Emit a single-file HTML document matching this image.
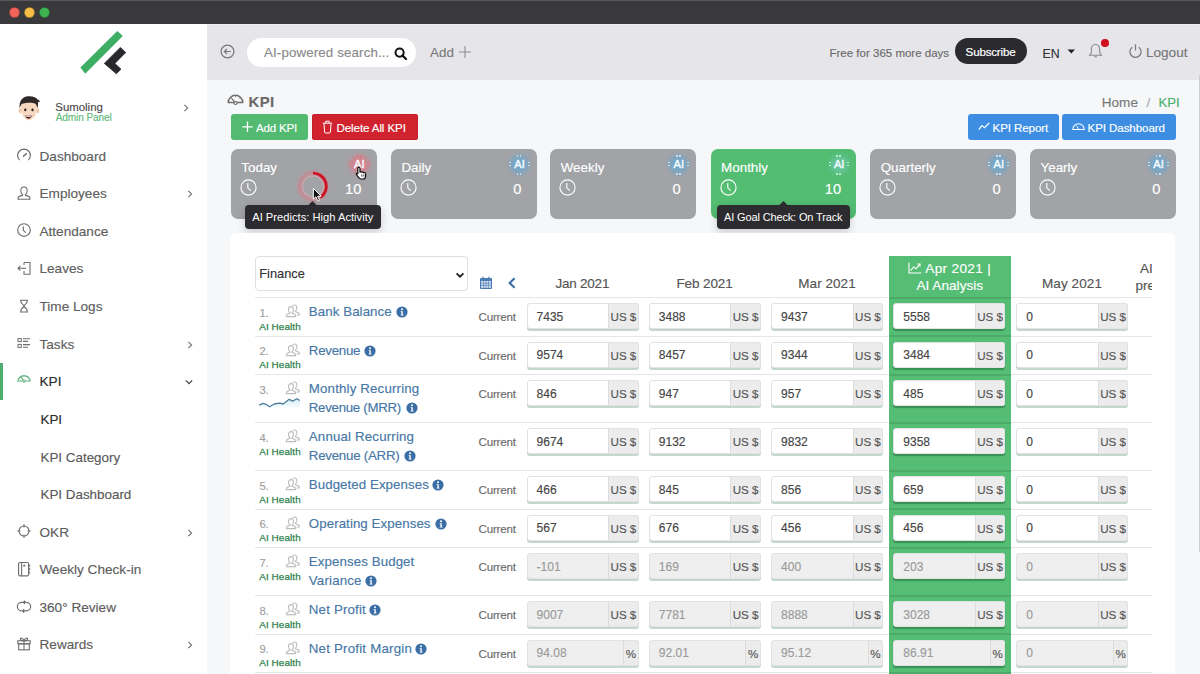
<!DOCTYPE html>
<html><head><meta charset="utf-8">
<style>
*{box-sizing:border-box;margin:0;padding:0}
html,body{width:1200px;height:674px;overflow:hidden}
body{position:relative;background:#f6f7f9;font-family:"Liberation Sans",sans-serif;color:#444}
.b{position:absolute}
.t{position:absolute;white-space:nowrap;line-height:1;-webkit-text-stroke-width:0.15px}
</style></head><body>
<div class="b" style="left:0px;top:0px;width:1200px;height:24px;background:#39393b;"></div>
<div class="b" style="left:0px;top:0px;width:1200px;height:1px;background:#58585a;"></div>
<div class="b" style="left:9.9px;top:7.7px;width:9.6px;height:9.6px;border-radius:50%;background:#f0625a;box-shadow:0 0 0 0.7px #c94b45;"></div>
<div class="b" style="left:24.8px;top:7.7px;width:9.6px;height:9.6px;border-radius:50%;background:#f5bf45;box-shadow:0 0 0 0.7px #c79a30;"></div>
<div class="b" style="left:39.7px;top:7.7px;width:9.6px;height:9.6px;border-radius:50%;background:#3db552;box-shadow:0 0 0 0.7px #2b8d3b;"></div>
<div class="b" style="left:0px;top:24px;width:207px;height:650px;background:#fff;"></div>
<div class="b" style="left:207px;top:24px;width:993px;height:56px;background:#e6e6ea;"></div>
<div class="b" style="left:207px;top:24px;width:993px;height:1.2px;background:#eeeef1;"></div>
<div class="b" style="left:207px;top:80px;width:993px;height:594px;background:#f6f7f9;"></div>
<div class="b" style="left:1199px;top:75px;width:1px;height:477px;background:#cdcdcf;"></div>
<svg class="b" style="left:70px;top:25px;" width="70" height="55" viewBox="0 0 70 55" fill="none"><polygon points="47.3,6 52.8,11.1 15.2,48.7 10.4,42.5" fill="#3dae64"/><polygon points="50.4,22.4 55.7,27.5 44.9,38.4 51,44.2 46.3,48.7 34.3,38.4" fill="#29292d" stroke="#29292d" stroke-width="0.8" stroke-linejoin="round"/></svg>
<svg class="b" style="left:14px;top:92px" width="30" height="32" viewBox="0 0 632 674">
<ellipse cx="130" cy="395" rx="30" ry="55" fill="#efc6a6"/>
<ellipse cx="502" cy="395" rx="30" ry="55" fill="#efc6a6"/>
<path d="M140,250 C130,420 170,560 315,600 C460,560 500,420 490,250 C440,200 200,200 140,250Z" fill="#f6d9c0"/>
<path d="M118,340 C105,200 170,95 300,88 C400,82 470,110 500,160 C520,175 545,185 548,198 C530,205 515,210 505,215 C510,260 505,300 495,340 C480,290 470,260 450,245 C380,215 250,220 165,250 C150,270 135,300 118,340Z" fill="#2f2a28"/>
<ellipse cx="238" cy="378" rx="24" ry="28" fill="#2a211d"/>
<ellipse cx="390" cy="378" rx="24" ry="28" fill="#2a211d"/>
<path d="M230,490 C280,505 340,505 385,485 C375,530 350,560 308,562 C265,562 240,530 230,490Z" fill="#5b2323"/>
<path d="M240,495 C290,508 340,506 378,490 C375,505 370,512 365,515 C320,525 280,522 248,515Z" fill="#fff"/>
</svg>
<div class="t" style="left:55.30px;top:101.85px;font-size:11.4px;color:#4a4a4a;letter-spacing:0.002px;">Sumoling</div>
<div class="t" style="left:55.70px;top:112.53px;font-size:10px;color:#5fb97c;letter-spacing:-0.07px;">Admin Panel</div>
<svg class="b" style="left:182px;top:103px;" width="8" height="10" viewBox="0 0 8 10" fill="none"><polyline points="2.4,1.8 5.6,5 2.4,8.2" stroke="#777" stroke-width="1.2" fill="none"/></svg>
<div class="t" style="left:39.50px;top:149.69px;font-size:13.6px;color:#5e5e5e;">Dashboard</div>
<svg class="b" style="left:15.5px;top:147.1px;" width="16" height="16" viewBox="0 0 16 16" fill="none"><path d="M3.6,13.1 A6.4,6.4 0 1 1 12.4,13.1" stroke="#6e6e6e" stroke-width="1.2" fill="none"/><line x1="7.4" y1="9.2" x2="10.4" y2="6.6" stroke="#6e6e6e" stroke-width="1.4" stroke-linecap="round"/></svg>
<div class="t" style="left:39.50px;top:187.29px;font-size:13.6px;color:#5e5e5e;">Employees</div>
<svg class="b" style="left:15.5px;top:184.7px;" width="16" height="16" viewBox="0 0 16 16" fill="none"><path d="M8,2 C5.8,2 4.8,3.8 4.8,5.8 C4.8,8 6,9.3 6.6,9.7 L6.6,10.4 C4,10.9 2,11.7 2,13.4 L2,14.2 L14,14.2 L14,13.4 C14,11.7 12,10.9 9.4,10.4 L9.4,9.7 C10,9.3 11.2,8 11.2,5.8 C11.2,3.8 10.2,2 8,2Z" stroke="#6e6e6e" stroke-width="1.1" fill="none"/></svg>
<svg class="b" style="left:186px;top:189.2px;" width="8" height="10" viewBox="0 0 8 10" fill="none"><polyline points="2.4,1.8 5.6,5 2.4,8.2" stroke="#777" stroke-width="1.2" fill="none"/></svg>
<div class="t" style="left:39.50px;top:224.89px;font-size:13.6px;color:#5e5e5e;">Attendance</div>
<svg class="b" style="left:15.5px;top:222.29999999999998px;" width="16" height="16" viewBox="0 0 16 16" fill="none"><circle cx="8" cy="8" r="6.3" stroke="#6e6e6e" stroke-width="1.15" fill="none"/><polyline points="7.3,4.2 7.3,8.3 9.8,10.6" stroke="#6e6e6e" stroke-width="1.15" fill="none"/></svg>
<div class="t" style="left:39.50px;top:262.49px;font-size:13.6px;color:#5e5e5e;">Leaves</div>
<svg class="b" style="left:15.5px;top:259.9px;" width="16" height="16" viewBox="0 0 16 16" fill="none"><polyline points="8,2.5 14,2.5 14,14.2 8,14.2 8,11" stroke="#6e6e6e" stroke-width="1.1" fill="none"/><line x1="8" y1="2.5" x2="8" y2="5" stroke="#6e6e6e" stroke-width="1.1"/><line x1="2" y1="8.3" x2="10" y2="8.3" stroke="#6e6e6e" stroke-width="1.1"/><polyline points="4.3,6 2,8.3 4.3,10.6" stroke="#6e6e6e" stroke-width="1.1" fill="none"/></svg>
<div class="t" style="left:39.50px;top:300.09px;font-size:13.6px;color:#5e5e5e;">Time Logs</div>
<svg class="b" style="left:15.5px;top:297.5px;" width="16" height="16" viewBox="0 0 16 16" fill="none"><path d="M4,2.2 L12,2.2 M4,14 L12,14 M5,2.2 L5,4.5 L8,7.8 L11,4.5 L11,2.2 M5,14 L5,11.5 L8,8.3 L11,11.5 L11,14" stroke="#6e6e6e" stroke-width="1.1" fill="none"/></svg>
<div class="t" style="left:39.50px;top:337.69px;font-size:13.6px;color:#5e5e5e;">Tasks</div>
<svg class="b" style="left:15.5px;top:335.09999999999997px;" width="16" height="16" viewBox="0 0 16 16" fill="none"><rect x="2" y="3.6" width="3.3" height="3" stroke="#6e6e6e" stroke-width="1" fill="none"/><rect x="2" y="9.4" width="3.3" height="3" stroke="#6e6e6e" stroke-width="1" fill="none"/><path d="M7,3.8 L14,3.8 M7,6.4 L12,6.4 M7,9.6 L14,9.6 M7,12.2 L12,12.2" stroke="#6e6e6e" stroke-width="1.1"/></svg>
<svg class="b" style="left:186px;top:339.59999999999997px;" width="8" height="10" viewBox="0 0 8 10" fill="none"><polyline points="2.4,1.8 5.6,5 2.4,8.2" stroke="#777" stroke-width="1.2" fill="none"/></svg>
<div class="t" style="left:39.50px;top:375.29px;font-size:13.6px;color:#2a2a2a;">KPI</div>
<svg class="b" style="left:15.5px;top:369.09999999999997px;" width="16" height="16" viewBox="0 0 16 16" fill="none"><path d="M1.8,12 A6.3,6.3 0 0 1 14.2,12 Z" stroke="#5cb27a" stroke-width="1.2" fill="none" stroke-linejoin="round"/><line x1="8" y1="12" x2="5" y2="8.2" stroke="#5cb27a" stroke-width="1.1"/><circle cx="8" cy="12.2" r="1.2" fill="#fff" stroke="#5cb27a" stroke-width="1"/><path d="M8,5.8 L8,6.9 M4,7.4 L4.8,8.1 M12,7.4 L11.2,8.1" stroke="#5cb27a" stroke-width="0.9"/></svg>
<svg class="b" style="left:183.5px;top:378.40000000000003px;" width="10" height="8" viewBox="0 0 10 8" fill="none"><polyline points="1.8,2.4 5,5.6 8.2,2.4" stroke="#444" stroke-width="1.3" fill="none"/></svg>
<div class="t" style="left:40.50px;top:413.06px;font-size:13.4px;color:#2a2a2a;">KPI</div>
<div class="t" style="left:40.50px;top:450.66px;font-size:13.4px;color:#5a5a5a;">KPI Category</div>
<div class="t" style="left:40.50px;top:488.26px;font-size:13.4px;color:#5a5a5a;">KPI Dashboard</div>
<div class="t" style="left:39.50px;top:525.69px;font-size:13.6px;color:#5e5e5e;">OKR</div>
<svg class="b" style="left:15.5px;top:523.1px;" width="16" height="16" viewBox="0 0 16 16" fill="none"><circle cx="8" cy="8" r="5" stroke="#6e6e6e" stroke-width="1.15" fill="none"/><path d="M8,1.3 L8,4.5 M8,11.5 L8,14.7 M1.3,8 L4.5,8 M11.5,8 L14.7,8" stroke="#6e6e6e" stroke-width="1.15"/></svg>
<svg class="b" style="left:186px;top:527.6px;" width="8" height="10" viewBox="0 0 8 10" fill="none"><polyline points="2.4,1.8 5.6,5 2.4,8.2" stroke="#777" stroke-width="1.2" fill="none"/></svg>
<div class="t" style="left:39.50px;top:563.29px;font-size:13.6px;color:#5e5e5e;">Weekly Check-in</div>
<svg class="b" style="left:15.5px;top:560.6999999999999px;" width="16" height="16" viewBox="0 0 16 16" fill="none"><rect x="2.6" y="1.5" width="10" height="13.3" rx="1.2" stroke="#6e6e6e" stroke-width="1.15" fill="none"/><line x1="5.6" y1="1.5" x2="5.6" y2="14.8" stroke="#6e6e6e" stroke-width="1.1"/><rect x="7.3" y="3.7" width="1.9" height="1.9" fill="#6e6e6e"/><path d="M12.6,3.6 A1.1,1.1 0 0 1 12.6,5.8 M12.6,7 A1.1,1.1 0 0 1 12.6,9.2 M12.6,10.4 A1.1,1.1 0 0 1 12.6,12.6" stroke="#6e6e6e" stroke-width="1" fill="none"/></svg>
<div class="t" style="left:39.50px;top:600.89px;font-size:13.6px;color:#5e5e5e;">360° Review</div>
<svg class="b" style="left:15.5px;top:598.3000000000001px;" width="16" height="16" viewBox="0 0 16 16" fill="none"><path d="M5.6,12.9 A4.3,4.3 0 0 1 5.6,4.3 L9.2,4.3 M7.8,2.7 L9.6,4.3 L7.8,5.9 M10.4,4.3 A4.3,4.3 0 0 1 10.4,12.9 L6.8,12.9 M8.2,11.3 L6.4,12.9 L8.2,14.5" stroke="#6e6e6e" stroke-width="1.15" fill="none"/></svg>
<div class="t" style="left:39.50px;top:638.49px;font-size:13.6px;color:#5e5e5e;">Rewards</div>
<svg class="b" style="left:15.5px;top:635.9px;" width="16" height="16" viewBox="0 0 16 16" fill="none"><rect x="1.8" y="4.8" width="12.4" height="3" stroke="#6e6e6e" stroke-width="1.1" fill="none"/><rect x="2.7" y="7.8" width="10.6" height="6" stroke="#6e6e6e" stroke-width="1.1" fill="none"/><path d="M8,4.8 L8,13.8 M8,4.8 C7,2 4.2,1.2 4.4,3.2 C4.5,4.2 6,4.8 8,4.8 C10,4.8 11.5,4.2 11.6,3.2 C11.8,1.2 9,2 8,4.8" stroke="#6e6e6e" stroke-width="1.05" fill="none"/></svg>
<svg class="b" style="left:186px;top:640.4px;" width="8" height="10" viewBox="0 0 8 10" fill="none"><polyline points="2.4,1.8 5.6,5 2.4,8.2" stroke="#777" stroke-width="1.2" fill="none"/></svg>
<div class="b" style="left:0px;top:362.5px;width:2.6px;height:37.5px;background:#4fae6e;"></div>
<svg class="b" style="left:219.5px;top:43.5px;" width="15" height="15" viewBox="0 0 15 15" fill="none"><circle cx="7.5" cy="7.5" r="6.4" stroke="#777" stroke-width="1.2" fill="none"/><path d="M10.8,7.5 L4.4,7.5 M7,4.9 L4.4,7.5 L7,10.1" stroke="#777" stroke-width="1.2" fill="none"/></svg>
<div class="b" style="left:247px;top:38px;width:169px;height:29px;background:#fff;border-radius:14.5px;"></div>
<div class="t" style="left:264.00px;top:45.94px;font-size:13.3px;color:#8a8a8a;letter-spacing:0.138px;">AI-powered search...</div>
<svg class="b" style="left:394px;top:46.5px;" width="14" height="13" viewBox="0 0 14 13" fill="none"><circle cx="5.6" cy="5.6" r="4.1" stroke="#111" stroke-width="2" fill="none"/><line x1="8.6" y1="8.6" x2="12" y2="12" stroke="#111" stroke-width="2.2" stroke-linecap="round"/></svg>
<div class="t" style="left:430.00px;top:45.86px;font-size:13.4px;color:#7a7a7a;">Add</div>
<svg class="b" style="left:457.5px;top:44.5px;" width="14" height="14" viewBox="0 0 14 14" fill="none"><path d="M7,1 L7,13 M1,7 L13,7" stroke="#8f8f8f" stroke-width="1.1"/></svg>
<div class="t" style="left:829.50px;top:47.57px;font-size:11.5px;color:#6a6a6a;letter-spacing:0.004px;">Free for 365 more days</div>
<div class="b" style="left:955px;top:38.3px;width:71.5px;height:25.5px;background:#2b2b2f;border-radius:13px;"></div>
<div class="t" style="left:990.50px;transform:translateX(-50%);top:45.58px;font-size:11.6px;color:#fff;letter-spacing:-0.194px;-webkit-text-stroke-width:0.2px;">Subscribe</div>
<div class="t" style="left:1042.50px;top:47.80px;font-size:12.4px;color:#333;">EN</div>
<svg class="b" style="left:1067px;top:49px;" width="9" height="5" viewBox="0 0 9 5" fill="none"><polygon points="0.5,0.5 8,0.5 4.25,4.5" fill="#222"/></svg>
<svg class="b" style="left:1087px;top:42px;" width="17" height="17" viewBox="0 0 17 17" fill="none"><path d="M8.5,2.5 C5.5,2.5 4.3,5 4.3,7.5 L4.3,10.8 L2.6,13.2 L14.4,13.2 L12.7,10.8 L12.7,7.5 C12.7,5 11.5,2.5 8.5,2.5Z M7,14.8 L10,14.8" stroke="#8a8a8a" stroke-width="1.1" fill="none"/></svg>
<div class="b" style="left:1101.3px;top:39.3px;width:7.6px;height:7.6px;border-radius:50%;background:#d0101f;"></div>
<svg class="b" style="left:1127.5px;top:43.2px;" width="15" height="15" viewBox="0 0 15 15" fill="none"><path d="M4.2,4.2 A5.6,5.6 0 1 0 10.8,4.2" stroke="#777" stroke-width="1.2" fill="none"/><line x1="7.5" y1="1.3" x2="7.5" y2="7.5" stroke="#777" stroke-width="1.2"/></svg>
<div class="t" style="left:1145.90px;top:45.79px;font-size:13.6px;color:#777;letter-spacing:0.004px;">Logout</div>
<svg class="b" style="left:226px;top:93px;" width="19" height="13" viewBox="0 0 19 13" fill="none"><path d="M2.2,9.6 A7.3,7.3 0 0 1 16.8,9.6 Z" stroke="#6e6e6e" stroke-width="1.5" fill="none" stroke-linejoin="round"/><line x1="9.5" y1="9.6" x2="5.6" y2="5.4" stroke="#6e6e6e" stroke-width="1.3"/><circle cx="9.5" cy="10" r="1.5" fill="#f6f7f9" stroke="#6e6e6e" stroke-width="1.2"/><path d="M9.5,2.4 L9.5,3.8 M4.6,4.4 L5.5,5.3 M14.4,4.4 L13.5,5.3" stroke="#6e6e6e" stroke-width="1.1"/></svg>
<div class="t" style="left:248.50px;top:94.99px;font-size:14.9px;color:#6a6a6a;font-weight:bold;letter-spacing:0.389px;">KPI</div>
<div class="b" style="left:231px;top:114.4px;width:77px;height:25.2px;background:#52ba71;border-radius:3px;"></div>
<svg class="b" style="left:241.5px;top:120.5px;" width="11" height="12" viewBox="0 0 11 12" fill="none"><path d="M5.5,0.5 L5.5,11 M0.3,5.8 L10.7,5.8" stroke="#fff" stroke-width="1.3"/></svg>
<div class="t" style="left:256.00px;top:121.68px;font-size:11.6px;color:#fff;letter-spacing:-0.239px;">Add KPI</div>
<div class="b" style="left:312px;top:114.4px;width:105.5px;height:25.2px;background:#d1232e;border-radius:3px;box-shadow:inset 0 0 0 1px #c21e29;"></div>
<svg class="b" style="left:322px;top:119.5px;" width="11" height="14" viewBox="0 0 11 14" fill="none"><path d="M0.8,3.2 L10.2,3.2 M3.8,3.2 L3.8,1.2 L7.2,1.2 L7.2,3.2" stroke="#fff" stroke-width="1" fill="none"/><path d="M2,3.6 L2.6,12.2 C2.7,12.8 3,13 3.6,13 L7.4,13 C8,13 8.3,12.8 8.4,12.2 L9,3.6" stroke="#fff" stroke-width="1" fill="none"/></svg>
<div class="t" style="left:336.50px;top:121.68px;font-size:11.6px;color:#fff;letter-spacing:-0.117px;">Delete All KPI</div>
<div class="t" style="left:1101.80px;top:95.77px;font-size:13.5px;color:#777;letter-spacing:0.03px;">Home</div>
<div class="t" style="left:1146.50px;top:95.57px;font-size:13.5px;color:#aaa;">/</div>
<div class="t" style="left:1158.40px;top:95.83px;font-size:13.2px;color:#4caf6a;">KPI</div>
<div class="b" style="left:967.7px;top:114.4px;width:91.3px;height:25.2px;background:#3d8ee3;border-radius:3px;"></div>
<svg class="b" style="left:977.5px;top:122px;" width="12" height="9" viewBox="0 0 12 9" fill="none"><polyline points="0.8,7.5 4,3.6 6.5,5.6 11.2,1" stroke="#fff" stroke-width="1.2" fill="none"/></svg>
<div class="t" style="left:992.60px;top:121.88px;font-size:11.6px;color:#fff;letter-spacing:-0.123px;">KPI Report</div>
<div class="b" style="left:1062.2px;top:114.4px;width:113.8px;height:25.2px;background:#3d8ee3;border-radius:3px;"></div>
<svg class="b" style="left:1071.5px;top:121px;" width="13" height="10" viewBox="0 0 13 10" fill="none"><path d="M0.8,8.5 A5.7,5.7 0 0 1 12.2,8.5 Z" stroke="#fff" stroke-width="1.05" fill="none"/><line x1="6.5" y1="8" x2="4.5" y2="4.8" stroke="#fff" stroke-width="1"/></svg>
<div class="t" style="left:1087.50px;top:121.88px;font-size:11.6px;color:#fff;letter-spacing:-0.094px;">KPI Dashboard</div>
<div class="b" style="left:231px;top:149.3px;width:145.6px;height:69.5px;background:#a2a3a7;border-radius:7px;"></div>
<div class="t" style="left:241.30px;top:161.46px;font-size:13.4px;color:#fff;">Today</div>
<svg class="b" style="left:240px;top:178.5px;" width="17" height="17" viewBox="0 0 17 17" fill="none"><circle cx="8.5" cy="8.5" r="7.6" stroke="#fff" stroke-width="1.1" fill="none"/><polyline points="7.8,4 7.8,8.8 10.8,11.6" stroke="#fff" stroke-width="1.1" fill="none"/></svg>
<div class="t" style="right:838.70px;top:182.16px;font-size:14.7px;color:#fff;">10</div>
<div class="b" style="left:349.7px;top:155.1px;width:19px;height:19px;border-radius:50%;background:rgba(228,120,132,0.8);filter:blur(2.6px);"></div>
<div class="b" style="left:356.5px;top:155.0px;width:1.8px;height:1.5px;background:#de7580;"></div>
<div class="b" style="left:359.6px;top:155.0px;width:1.8px;height:1.5px;background:#de7580;"></div>
<div class="b" style="left:356.5px;top:173.0px;width:1.8px;height:1.5px;background:#de7580;"></div>
<div class="b" style="left:359.6px;top:173.0px;width:1.8px;height:1.5px;background:#de7580;"></div>
<div class="b" style="left:348.8px;top:161.8px;width:2px;height:1.3px;background:#de7580;"></div>
<div class="b" style="left:348.8px;top:164.9px;width:2px;height:1.3px;background:#de7580;"></div>
<div class="b" style="left:367.5px;top:161.8px;width:2px;height:1.3px;background:#de7580;"></div>
<div class="b" style="left:367.5px;top:164.9px;width:2px;height:1.3px;background:#de7580;"></div>
<div class="t" style="left:359.40px;transform:translateX(-50%);top:158.82px;font-size:11.2px;color:#f2fbff;-webkit-text-stroke-width:0.45px;">AI</div>
<div class="b" style="left:391.1px;top:149.3px;width:145.6px;height:69.5px;background:#a2a3a7;border-radius:7px;"></div>
<div class="t" style="left:401.40px;top:161.46px;font-size:13.4px;color:#fff;">Daily</div>
<svg class="b" style="left:400.1px;top:178.5px;" width="17" height="17" viewBox="0 0 17 17" fill="none"><circle cx="8.5" cy="8.5" r="7.6" stroke="#fff" stroke-width="1.1" fill="none"/><polyline points="7.8,4 7.8,8.8 10.8,11.6" stroke="#fff" stroke-width="1.1" fill="none"/></svg>
<div class="t" style="right:678.60px;top:182.16px;font-size:14.7px;color:#fff;">0</div>
<div class="b" style="left:509.8px;top:155.1px;width:19px;height:19px;border-radius:50%;background:rgba(112,166,202,0.9);filter:blur(2.6px);"></div>
<div class="b" style="left:516.6px;top:155.0px;width:1.8px;height:1.5px;background:#c4e0f0;"></div>
<div class="b" style="left:519.7px;top:155.0px;width:1.8px;height:1.5px;background:#c4e0f0;"></div>
<div class="b" style="left:516.6px;top:173.0px;width:1.8px;height:1.5px;background:#c4e0f0;"></div>
<div class="b" style="left:519.7px;top:173.0px;width:1.8px;height:1.5px;background:#c4e0f0;"></div>
<div class="b" style="left:508.9px;top:161.8px;width:2px;height:1.3px;background:#c4e0f0;"></div>
<div class="b" style="left:508.9px;top:164.9px;width:2px;height:1.3px;background:#c4e0f0;"></div>
<div class="b" style="left:527.6px;top:161.8px;width:2px;height:1.3px;background:#c4e0f0;"></div>
<div class="b" style="left:527.6px;top:164.9px;width:2px;height:1.3px;background:#c4e0f0;"></div>
<div class="t" style="left:519.50px;transform:translateX(-50%);top:158.82px;font-size:11.2px;color:#f2fbff;-webkit-text-stroke-width:0.45px;">AI</div>
<div class="b" style="left:550.4px;top:149.3px;width:145.6px;height:69.5px;background:#a2a3a7;border-radius:7px;"></div>
<div class="t" style="left:560.70px;top:161.46px;font-size:13.4px;color:#fff;">Weekly</div>
<svg class="b" style="left:559.4px;top:178.5px;" width="17" height="17" viewBox="0 0 17 17" fill="none"><circle cx="8.5" cy="8.5" r="7.6" stroke="#fff" stroke-width="1.1" fill="none"/><polyline points="7.8,4 7.8,8.8 10.8,11.6" stroke="#fff" stroke-width="1.1" fill="none"/></svg>
<div class="t" style="right:519.30px;top:182.16px;font-size:14.7px;color:#fff;">0</div>
<div class="b" style="left:669.1px;top:155.1px;width:19px;height:19px;border-radius:50%;background:rgba(112,166,202,0.9);filter:blur(2.6px);"></div>
<div class="b" style="left:675.9px;top:155.0px;width:1.8px;height:1.5px;background:#c4e0f0;"></div>
<div class="b" style="left:679.0px;top:155.0px;width:1.8px;height:1.5px;background:#c4e0f0;"></div>
<div class="b" style="left:675.9px;top:173.0px;width:1.8px;height:1.5px;background:#c4e0f0;"></div>
<div class="b" style="left:679.0px;top:173.0px;width:1.8px;height:1.5px;background:#c4e0f0;"></div>
<div class="b" style="left:668.2px;top:161.8px;width:2px;height:1.3px;background:#c4e0f0;"></div>
<div class="b" style="left:668.2px;top:164.9px;width:2px;height:1.3px;background:#c4e0f0;"></div>
<div class="b" style="left:686.9px;top:161.8px;width:2px;height:1.3px;background:#c4e0f0;"></div>
<div class="b" style="left:686.9px;top:164.9px;width:2px;height:1.3px;background:#c4e0f0;"></div>
<div class="t" style="left:678.80px;transform:translateX(-50%);top:158.82px;font-size:11.2px;color:#f2fbff;-webkit-text-stroke-width:0.45px;">AI</div>
<div class="b" style="left:710.8px;top:149.3px;width:145.6px;height:69.5px;background:#53bd72;border-radius:7px;"></div>
<div class="t" style="left:721.10px;top:161.46px;font-size:13.4px;color:#fff;">Monthly</div>
<svg class="b" style="left:719.8px;top:178.5px;" width="17" height="17" viewBox="0 0 17 17" fill="none"><circle cx="8.5" cy="8.5" r="7.6" stroke="#fff" stroke-width="1.1" fill="none"/><polyline points="7.8,4 7.8,8.8 10.8,11.6" stroke="#fff" stroke-width="1.1" fill="none"/></svg>
<div class="t" style="right:358.90px;top:182.16px;font-size:14.7px;color:#fff;">10</div>
<div class="b" style="left:829.5px;top:155.1px;width:19px;height:19px;border-radius:50%;background:rgba(105,198,165,0.75);filter:blur(2.6px);"></div>
<div class="b" style="left:836.3px;top:155.0px;width:1.8px;height:1.5px;background:#b4ecca;"></div>
<div class="b" style="left:839.4px;top:155.0px;width:1.8px;height:1.5px;background:#b4ecca;"></div>
<div class="b" style="left:836.3px;top:173.0px;width:1.8px;height:1.5px;background:#b4ecca;"></div>
<div class="b" style="left:839.4px;top:173.0px;width:1.8px;height:1.5px;background:#b4ecca;"></div>
<div class="b" style="left:828.6px;top:161.8px;width:2px;height:1.3px;background:#b4ecca;"></div>
<div class="b" style="left:828.6px;top:164.9px;width:2px;height:1.3px;background:#b4ecca;"></div>
<div class="b" style="left:847.3px;top:161.8px;width:2px;height:1.3px;background:#b4ecca;"></div>
<div class="b" style="left:847.3px;top:164.9px;width:2px;height:1.3px;background:#b4ecca;"></div>
<div class="t" style="left:839.20px;transform:translateX(-50%);top:158.82px;font-size:11.2px;color:#f2fbff;-webkit-text-stroke-width:0.45px;">AI</div>
<div class="b" style="left:870.4px;top:149.3px;width:145.6px;height:69.5px;background:#a2a3a7;border-radius:7px;"></div>
<div class="t" style="left:880.70px;top:161.46px;font-size:13.4px;color:#fff;">Quarterly</div>
<svg class="b" style="left:879.4px;top:178.5px;" width="17" height="17" viewBox="0 0 17 17" fill="none"><circle cx="8.5" cy="8.5" r="7.6" stroke="#fff" stroke-width="1.1" fill="none"/><polyline points="7.8,4 7.8,8.8 10.8,11.6" stroke="#fff" stroke-width="1.1" fill="none"/></svg>
<div class="t" style="right:199.30px;top:182.16px;font-size:14.7px;color:#fff;">0</div>
<div class="b" style="left:989.1px;top:155.1px;width:19px;height:19px;border-radius:50%;background:rgba(112,166,202,0.9);filter:blur(2.6px);"></div>
<div class="b" style="left:995.9px;top:155.0px;width:1.8px;height:1.5px;background:#c4e0f0;"></div>
<div class="b" style="left:999.0px;top:155.0px;width:1.8px;height:1.5px;background:#c4e0f0;"></div>
<div class="b" style="left:995.9px;top:173.0px;width:1.8px;height:1.5px;background:#c4e0f0;"></div>
<div class="b" style="left:999.0px;top:173.0px;width:1.8px;height:1.5px;background:#c4e0f0;"></div>
<div class="b" style="left:988.2px;top:161.8px;width:2px;height:1.3px;background:#c4e0f0;"></div>
<div class="b" style="left:988.2px;top:164.9px;width:2px;height:1.3px;background:#c4e0f0;"></div>
<div class="b" style="left:1006.9px;top:161.8px;width:2px;height:1.3px;background:#c4e0f0;"></div>
<div class="b" style="left:1006.9px;top:164.9px;width:2px;height:1.3px;background:#c4e0f0;"></div>
<div class="t" style="left:998.80px;transform:translateX(-50%);top:158.82px;font-size:11.2px;color:#f2fbff;-webkit-text-stroke-width:0.45px;">AI</div>
<div class="b" style="left:1030.2px;top:149.3px;width:145.6px;height:69.5px;background:#a2a3a7;border-radius:7px;"></div>
<div class="t" style="left:1040.50px;top:161.46px;font-size:13.4px;color:#fff;">Yearly</div>
<svg class="b" style="left:1039.2px;top:178.5px;" width="17" height="17" viewBox="0 0 17 17" fill="none"><circle cx="8.5" cy="8.5" r="7.6" stroke="#fff" stroke-width="1.1" fill="none"/><polyline points="7.8,4 7.8,8.8 10.8,11.6" stroke="#fff" stroke-width="1.1" fill="none"/></svg>
<div class="t" style="right:39.50px;top:182.16px;font-size:14.7px;color:#fff;">0</div>
<div class="b" style="left:1148.9px;top:155.1px;width:19px;height:19px;border-radius:50%;background:rgba(112,166,202,0.9);filter:blur(2.6px);"></div>
<div class="b" style="left:1155.7px;top:155.0px;width:1.8px;height:1.5px;background:#c4e0f0;"></div>
<div class="b" style="left:1158.8px;top:155.0px;width:1.8px;height:1.5px;background:#c4e0f0;"></div>
<div class="b" style="left:1155.7px;top:173.0px;width:1.8px;height:1.5px;background:#c4e0f0;"></div>
<div class="b" style="left:1158.8px;top:173.0px;width:1.8px;height:1.5px;background:#c4e0f0;"></div>
<div class="b" style="left:1148.0px;top:161.8px;width:2px;height:1.3px;background:#c4e0f0;"></div>
<div class="b" style="left:1148.0px;top:164.9px;width:2px;height:1.3px;background:#c4e0f0;"></div>
<div class="b" style="left:1166.7px;top:161.8px;width:2px;height:1.3px;background:#c4e0f0;"></div>
<div class="b" style="left:1166.7px;top:164.9px;width:2px;height:1.3px;background:#c4e0f0;"></div>
<div class="t" style="left:1158.60px;transform:translateX(-50%);top:158.82px;font-size:11.2px;color:#f2fbff;-webkit-text-stroke-width:0.45px;">AI</div>
<svg class="b" style="left:294px;top:168px;" width="38" height="38" viewBox="0 0 38 38" fill="none"><defs><filter id="blr" x="-30%" y="-30%" width="160%" height="160%"><feGaussianBlur stdDeviation="1.2"/></filter></defs><circle cx="19" cy="18.4" r="13.4" stroke="rgba(236,110,125,0.45)" stroke-width="4" fill="none" filter="url(#blr)"/><circle cx="19" cy="18.4" r="10.6" stroke="rgba(235,175,182,0.55)" stroke-width="1.3" fill="none"/><path d="M19,5.1 A13.3,13.3 0 0 1 26.2,29.6" stroke="#cc1424" stroke-width="2.9" fill="none"/></svg>
<svg class="b" style="left:312px;top:187px;" width="12" height="16" viewBox="0 0 12 16" fill="none"><path d="M1.3,1.3 L1.3,12.2 L3.9,9.8 L5.9,14.2 L7.6,13.4 L5.7,9.2 L9.2,9.2 Z" fill="#111" stroke="#fff" stroke-width="1" stroke-linejoin="round"/></svg>
<svg class="b" style="left:354.5px;top:165.5px;" width="13" height="14" viewBox="0 0 13 14" fill="none"><path d="M3.8,1.2 C4.7,1.2 5,1.8 5,2.5 L5,6.2 C5.3,5.6 6.7,5.6 6.9,6.4 C7.3,5.9 8.6,6 8.8,6.9 C9.2,6.5 10.6,6.6 10.6,7.8 L10.6,10.2 C10.6,11.8 9.5,13 7.9,13 L6.1,13 C4.8,13 4.2,12.3 3.4,11.2 L1.4,8.5 C0.9,7.8 1.7,7 2.5,7.6 L2.8,7.9 L2.8,2.5 C2.8,1.8 3.1,1.2 3.8,1.2Z" fill="#fff" stroke="#111" stroke-width="1.2" stroke-linejoin="round"/><path d="M6.9,8.4 L6.9,10.6 M8.8,8.6 L8.8,10.6" stroke="#111" stroke-width="0.8"/></svg>
<div class="b" style="left:244.8px;top:205.3px;width:136px;height:23.3px;background:#2c2c30;border-radius:4px;box-shadow:0 3px 8px rgba(0,0,0,0.18);"></div>
<svg class="b" style="left:307.3px;top:200.5px;" width="11" height="5.5" viewBox="0 0 11 5.5" fill="none"><polygon points="0,5.5 5.5,0 11,5.5" fill="#2c2c30"/></svg>
<div class="t" style="left:312.80px;transform:translateX(-50%);top:212.26px;font-size:11.15px;color:#fff;letter-spacing:0.018px;-webkit-text-stroke-width:0;">AI Predicts: High Activity</div>
<div class="b" style="left:717px;top:205.3px;width:132.5px;height:23.3px;background:#2c2c30;border-radius:4px;box-shadow:0 3px 8px rgba(0,0,0,0.18);"></div>
<svg class="b" style="left:778.1px;top:200.5px;" width="11" height="5.5" viewBox="0 0 11 5.5" fill="none"><polygon points="0,5.5 5.5,0 11,5.5" fill="#2c2c30"/></svg>
<div class="t" style="left:783.25px;transform:translateX(-50%);top:212.39px;font-size:11.0px;color:#fff;letter-spacing:-0.148px;-webkit-text-stroke-width:0;">AI Goal Check: On Track</div>
<div class="b" style="left:230.4px;top:233.4px;width:945px;height:460px;background:#fff;border-radius:6px;"></div>
<div class="b" style="left:254.9px;top:256.4px;width:213.3px;height:35px;background:#fff;border:1px solid #dedede;border-radius:4px;"></div>
<div class="t" style="left:259.30px;top:268.16px;font-size:12.8px;color:#333;">Finance</div>
<svg class="b" style="left:455px;top:270.5px;" width="10" height="8" viewBox="0 0 10 8" fill="none"><polyline points="1.6,2.3 5,5.7 8.4,2.3" stroke="#222" stroke-width="1.8" fill="none"/></svg>
<svg class="b" style="left:479px;top:276px;" width="14" height="14" viewBox="0 0 14 14" fill="none"><rect x="1" y="2" width="12" height="11" rx="1" fill="#4b7db3"/><rect x="2.2" y="5" width="9.6" height="6.8" fill="#dfe9f4"/><path d="M2.2,7.2 L11.8,7.2 M2.2,9.4 L11.8,9.4 M4.6,5 L4.6,11.8 M7,5 L7,11.8 M9.4,5 L9.4,11.8" stroke="#4b7db3" stroke-width="0.7"/><rect x="3.4" y="0.6" width="1.2" height="2.6" fill="#4b7db3"/><rect x="9.4" y="0.6" width="1.2" height="2.6" fill="#4b7db3"/></svg>
<svg class="b" style="left:507px;top:277px;" width="10" height="12" viewBox="0 0 10 12" fill="none"><polyline points="7.6,1.2 2.6,6 7.6,10.8" stroke="#3a6ea5" stroke-width="2.1" fill="none" stroke-linejoin="round"/></svg>
<div class="b" style="left:888.5px;top:256.2px;width:122.2px;height:420px;background:#56bd75;"></div>
<div class="t" style="left:582.30px;transform:translateX(-50%);top:277.07px;font-size:13.5px;color:#555;letter-spacing:-0.221px;">Jan 2021</div>
<div class="t" style="left:704.50px;transform:translateX(-50%);top:277.07px;font-size:13.5px;color:#555;letter-spacing:-0.106px;">Feb 2021</div>
<div class="t" style="left:827.00px;transform:translateX(-50%);top:277.07px;font-size:13.5px;color:#555;letter-spacing:0.053px;">Mar 2021</div>
<div class="t" style="left:1072.00px;transform:translateX(-50%);top:277.07px;font-size:13.5px;color:#555;letter-spacing:0.088px;">May 2021</div>
<svg class="b" style="left:907.5px;top:262px;" width="14" height="12" viewBox="0 0 14 12" fill="none"><path d="M1,0.5 L1,11 L13.2,11" stroke="#fff" stroke-width="1.1" fill="none"/><polyline points="2.6,8.6 5.6,5 8,6.8 11.8,2.2" stroke="#fff" stroke-width="1.1" fill="none"/><polyline points="9.2,2 12,2 12,4.8" stroke="#fff" stroke-width="1.1" fill="none"/></svg>
<div class="t" style="left:925.30px;top:262.19px;font-size:13.6px;color:#fff;letter-spacing:0.325px;">Apr 2021 |</div>
<div class="t" style="left:949.80px;transform:translateX(-50%);top:278.69px;font-size:13.6px;color:#fff;letter-spacing:0.026px;">AI Analysis</div>
<div class="b" style="left:1133px;top:250px;width:19px;height:50px;overflow:hidden;"><div class="t" style="left:7px;top:12.37px;font-size:13.5px;color:#555;">AI</div><div class="t" style="left:2.5px;top:28.57px;font-size:13.5px;color:#555;">prediction</div></div>
<div class="b" style="left:254.9px;top:297.0px;width:633.6px;height:1px;background:#e6e6e6;"></div>
<div class="b" style="left:888.5px;top:296.5px;width:122.2px;height:2px;background:#4cab69;"></div>
<div class="b" style="left:1010.7px;top:297.0px;width:141.3px;height:1px;background:#e6e6e6;"></div>
<div class="b" style="left:254.9px;top:335.5px;width:633.6px;height:1px;background:#e6e6e6;"></div>
<div class="b" style="left:888.5px;top:335.0px;width:122.2px;height:2px;background:#4cab69;"></div>
<div class="b" style="left:1010.7px;top:335.5px;width:141.3px;height:1px;background:#e6e6e6;"></div>
<div class="b" style="left:254.9px;top:374.0px;width:633.6px;height:1px;background:#e6e6e6;"></div>
<div class="b" style="left:888.5px;top:373.5px;width:122.2px;height:2px;background:#4cab69;"></div>
<div class="b" style="left:1010.7px;top:374.0px;width:141.3px;height:1px;background:#e6e6e6;"></div>
<div class="b" style="left:254.9px;top:422.0px;width:633.6px;height:1px;background:#e6e6e6;"></div>
<div class="b" style="left:888.5px;top:421.5px;width:122.2px;height:2px;background:#4cab69;"></div>
<div class="b" style="left:1010.7px;top:422.0px;width:141.3px;height:1px;background:#e6e6e6;"></div>
<div class="b" style="left:254.9px;top:470.0px;width:633.6px;height:1px;background:#e6e6e6;"></div>
<div class="b" style="left:888.5px;top:469.5px;width:122.2px;height:2px;background:#4cab69;"></div>
<div class="b" style="left:1010.7px;top:470.0px;width:141.3px;height:1px;background:#e6e6e6;"></div>
<div class="b" style="left:254.9px;top:508.5px;width:633.6px;height:1px;background:#e6e6e6;"></div>
<div class="b" style="left:888.5px;top:508.0px;width:122.2px;height:2px;background:#4cab69;"></div>
<div class="b" style="left:1010.7px;top:508.5px;width:141.3px;height:1px;background:#e6e6e6;"></div>
<div class="b" style="left:254.9px;top:547.0px;width:633.6px;height:1px;background:#e6e6e6;"></div>
<div class="b" style="left:888.5px;top:546.5px;width:122.2px;height:2px;background:#4cab69;"></div>
<div class="b" style="left:1010.7px;top:547.0px;width:141.3px;height:1px;background:#e6e6e6;"></div>
<div class="b" style="left:254.9px;top:595.0px;width:633.6px;height:1px;background:#e6e6e6;"></div>
<div class="b" style="left:888.5px;top:594.5px;width:122.2px;height:2px;background:#4cab69;"></div>
<div class="b" style="left:1010.7px;top:595.0px;width:141.3px;height:1px;background:#e6e6e6;"></div>
<div class="b" style="left:254.9px;top:633.5px;width:633.6px;height:1px;background:#e6e6e6;"></div>
<div class="b" style="left:888.5px;top:633.0px;width:122.2px;height:2px;background:#4cab69;"></div>
<div class="b" style="left:1010.7px;top:633.5px;width:141.3px;height:1px;background:#e6e6e6;"></div>
<div class="b" style="left:254.9px;top:672.0px;width:633.6px;height:1px;background:#e6e6e6;"></div>
<div class="b" style="left:888.5px;top:671.5px;width:122.2px;height:2px;background:#4cab69;"></div>
<div class="b" style="left:1010.7px;top:672.0px;width:141.3px;height:1px;background:#e6e6e6;"></div>
<div class="t" style="left:259.40px;top:307.52px;font-size:11.2px;color:#a0a0a0;">1.</div>
<svg class="b" style="left:284.5px;top:304.0px;" width="16" height="14" viewBox="0 0 16 14" fill="none"><path d="M6,2.6 C4.3,2.6 3.5,4 3.5,5.6 C3.5,7.3 4.4,8.4 5,8.7 L5,9.3 C3,9.8 1.4,10.4 1.4,11.8 L1.4,12.6 L10.6,12.6 L10.6,11.8 C10.6,10.4 9,9.8 7,9.3 L7,8.7 C7.6,8.4 8.5,7.3 8.5,5.6 C8.5,4 7.7,2.6 6,2.6Z" stroke="#bdbdbd" stroke-width="1.1" fill="#fff"/><path d="M7.6,2.2 C8,1.4 8.6,1 9.4,1 C11.1,1 11.9,2.4 11.9,4 C11.9,5.7 11,6.8 10.4,7.1 L10.4,7.7 C12.4,8.2 14.3,8.8 14.3,10.2 L14.3,11 L11.6,11" stroke="#bdbdbd" stroke-width="1.1" fill="none"/></svg>
<div class="t" style="left:259.20px;top:321.52px;font-size:9.9px;color:#2d7f4b;letter-spacing:0.11px;-webkit-text-stroke-width:0.25px;">AI Health</div>
<div class="t" style="left:308.80px;top:305.44px;font-size:13.3px;color:#4677a6;letter-spacing:0.077px;">Bank Balance</div>
<div class="t" style="right:684.20px;top:311.38px;font-size:11.6px;color:#6a6a6a;letter-spacing:-0.193px;">Current</div>
<div class="b" style="left:526.6px;top:303.0px;width:112.2px;height:26px;background:#fff;border:1px solid #e2e2e2;border-radius:3px;box-shadow:0 2px 0 #c3d8cb;"></div>
<div class="b" style="left:608.1px;top:303.0px;width:30.7px;height:26px;background:#ececec;border:1px solid #e2e2e2;border-left:1px solid #dcdcdc;border-radius:0 3px 3px 0;"></div>
<div class="t" style="left:536.60px;top:310.84px;font-size:12px;color:#444;">7435</div>
<div class="t" style="left:623.45px;transform:translateX(-50%);top:311.18px;font-size:11.6px;color:#555;">US $</div>
<div class="b" style="left:648.8px;top:303.0px;width:112.2px;height:26px;background:#fff;border:1px solid #e2e2e2;border-radius:3px;box-shadow:0 2px 0 #c3d8cb;"></div>
<div class="b" style="left:730.3px;top:303.0px;width:30.7px;height:26px;background:#ececec;border:1px solid #e2e2e2;border-left:1px solid #dcdcdc;border-radius:0 3px 3px 0;"></div>
<div class="t" style="left:658.80px;top:310.84px;font-size:12px;color:#444;">3488</div>
<div class="t" style="left:745.65px;transform:translateX(-50%);top:311.18px;font-size:11.6px;color:#555;">US $</div>
<div class="b" style="left:771.1px;top:303.0px;width:112.2px;height:26px;background:#fff;border:1px solid #e2e2e2;border-radius:3px;box-shadow:0 2px 0 #c3d8cb;"></div>
<div class="b" style="left:852.6px;top:303.0px;width:30.7px;height:26px;background:#ececec;border:1px solid #e2e2e2;border-left:1px solid #dcdcdc;border-radius:0 3px 3px 0;"></div>
<div class="t" style="left:781.10px;top:310.84px;font-size:12px;color:#444;">9437</div>
<div class="t" style="left:867.95px;transform:translateX(-50%);top:311.18px;font-size:11.6px;color:#555;">US $</div>
<div class="b" style="left:893.3px;top:303.0px;width:112.2px;height:26px;background:#fff;border:1px solid #e2e2e2;border-radius:3px;box-shadow:0 2px 1px rgba(20,90,45,0.45);"></div>
<div class="b" style="left:974.8px;top:303.0px;width:30.7px;height:26px;background:#ececec;border:1px solid #e2e2e2;border-left:1px solid #dcdcdc;border-radius:0 3px 3px 0;"></div>
<div class="t" style="left:903.30px;top:310.84px;font-size:12px;color:#444;">5558</div>
<div class="t" style="left:990.15px;transform:translateX(-50%);top:311.18px;font-size:11.6px;color:#555;">US $</div>
<div class="b" style="left:1016.3px;top:303.0px;width:112.2px;height:26px;background:#fff;border:1px solid #e2e2e2;border-radius:3px;box-shadow:0 2px 0 #c3d8cb;"></div>
<div class="b" style="left:1097.8px;top:303.0px;width:30.7px;height:26px;background:#ececec;border:1px solid #e2e2e2;border-left:1px solid #dcdcdc;border-radius:0 3px 3px 0;"></div>
<div class="t" style="left:1026.30px;top:310.84px;font-size:12px;color:#444;">0</div>
<div class="t" style="left:1113.15px;transform:translateX(-50%);top:311.18px;font-size:11.6px;color:#555;">US $</div>
<div class="t" style="left:259.40px;top:346.02px;font-size:11.2px;color:#a0a0a0;">2.</div>
<svg class="b" style="left:284.5px;top:342.5px;" width="16" height="14" viewBox="0 0 16 14" fill="none"><path d="M6,2.6 C4.3,2.6 3.5,4 3.5,5.6 C3.5,7.3 4.4,8.4 5,8.7 L5,9.3 C3,9.8 1.4,10.4 1.4,11.8 L1.4,12.6 L10.6,12.6 L10.6,11.8 C10.6,10.4 9,9.8 7,9.3 L7,8.7 C7.6,8.4 8.5,7.3 8.5,5.6 C8.5,4 7.7,2.6 6,2.6Z" stroke="#bdbdbd" stroke-width="1.1" fill="#fff"/><path d="M7.6,2.2 C8,1.4 8.6,1 9.4,1 C11.1,1 11.9,2.4 11.9,4 C11.9,5.7 11,6.8 10.4,7.1 L10.4,7.7 C12.4,8.2 14.3,8.8 14.3,10.2 L14.3,11 L11.6,11" stroke="#bdbdbd" stroke-width="1.1" fill="none"/></svg>
<div class="t" style="left:259.20px;top:360.02px;font-size:9.9px;color:#2d7f4b;letter-spacing:0.11px;-webkit-text-stroke-width:0.25px;">AI Health</div>
<div class="t" style="left:308.80px;top:343.94px;font-size:13.3px;color:#4677a6;letter-spacing:-0.254px;">Revenue</div>
<div class="t" style="right:684.20px;top:349.88px;font-size:11.6px;color:#6a6a6a;letter-spacing:-0.193px;">Current</div>
<div class="b" style="left:526.6px;top:341.5px;width:112.2px;height:26px;background:#fff;border:1px solid #e2e2e2;border-radius:3px;box-shadow:0 2px 0 #c3d8cb;"></div>
<div class="b" style="left:608.1px;top:341.5px;width:30.7px;height:26px;background:#ececec;border:1px solid #e2e2e2;border-left:1px solid #dcdcdc;border-radius:0 3px 3px 0;"></div>
<div class="t" style="left:536.60px;top:349.34px;font-size:12px;color:#444;">9574</div>
<div class="t" style="left:623.45px;transform:translateX(-50%);top:349.68px;font-size:11.6px;color:#555;">US $</div>
<div class="b" style="left:648.8px;top:341.5px;width:112.2px;height:26px;background:#fff;border:1px solid #e2e2e2;border-radius:3px;box-shadow:0 2px 0 #c3d8cb;"></div>
<div class="b" style="left:730.3px;top:341.5px;width:30.7px;height:26px;background:#ececec;border:1px solid #e2e2e2;border-left:1px solid #dcdcdc;border-radius:0 3px 3px 0;"></div>
<div class="t" style="left:658.80px;top:349.34px;font-size:12px;color:#444;">8457</div>
<div class="t" style="left:745.65px;transform:translateX(-50%);top:349.68px;font-size:11.6px;color:#555;">US $</div>
<div class="b" style="left:771.1px;top:341.5px;width:112.2px;height:26px;background:#fff;border:1px solid #e2e2e2;border-radius:3px;box-shadow:0 2px 0 #c3d8cb;"></div>
<div class="b" style="left:852.6px;top:341.5px;width:30.7px;height:26px;background:#ececec;border:1px solid #e2e2e2;border-left:1px solid #dcdcdc;border-radius:0 3px 3px 0;"></div>
<div class="t" style="left:781.10px;top:349.34px;font-size:12px;color:#444;">9344</div>
<div class="t" style="left:867.95px;transform:translateX(-50%);top:349.68px;font-size:11.6px;color:#555;">US $</div>
<div class="b" style="left:893.3px;top:341.5px;width:112.2px;height:26px;background:#fff;border:1px solid #e2e2e2;border-radius:3px;box-shadow:0 2px 1px rgba(20,90,45,0.45);"></div>
<div class="b" style="left:974.8px;top:341.5px;width:30.7px;height:26px;background:#ececec;border:1px solid #e2e2e2;border-left:1px solid #dcdcdc;border-radius:0 3px 3px 0;"></div>
<div class="t" style="left:903.30px;top:349.34px;font-size:12px;color:#444;">3484</div>
<div class="t" style="left:990.15px;transform:translateX(-50%);top:349.68px;font-size:11.6px;color:#555;">US $</div>
<div class="b" style="left:1016.3px;top:341.5px;width:112.2px;height:26px;background:#fff;border:1px solid #e2e2e2;border-radius:3px;box-shadow:0 2px 0 #c3d8cb;"></div>
<div class="b" style="left:1097.8px;top:341.5px;width:30.7px;height:26px;background:#ececec;border:1px solid #e2e2e2;border-left:1px solid #dcdcdc;border-radius:0 3px 3px 0;"></div>
<div class="t" style="left:1026.30px;top:349.34px;font-size:12px;color:#444;">0</div>
<div class="t" style="left:1113.15px;transform:translateX(-50%);top:349.68px;font-size:11.6px;color:#555;">US $</div>
<div class="t" style="left:259.40px;top:384.52px;font-size:11.2px;color:#a0a0a0;">3.</div>
<svg class="b" style="left:284.5px;top:381.0px;" width="16" height="14" viewBox="0 0 16 14" fill="none"><path d="M6,2.6 C4.3,2.6 3.5,4 3.5,5.6 C3.5,7.3 4.4,8.4 5,8.7 L5,9.3 C3,9.8 1.4,10.4 1.4,11.8 L1.4,12.6 L10.6,12.6 L10.6,11.8 C10.6,10.4 9,9.8 7,9.3 L7,8.7 C7.6,8.4 8.5,7.3 8.5,5.6 C8.5,4 7.7,2.6 6,2.6Z" stroke="#bdbdbd" stroke-width="1.1" fill="#fff"/><path d="M7.6,2.2 C8,1.4 8.6,1 9.4,1 C11.1,1 11.9,2.4 11.9,4 C11.9,5.7 11,6.8 10.4,7.1 L10.4,7.7 C12.4,8.2 14.3,8.8 14.3,10.2 L14.3,11 L11.6,11" stroke="#bdbdbd" stroke-width="1.1" fill="none"/></svg>
<svg class="b" style="left:257px;top:395px;" width="46" height="15" viewBox="0 0 46 15" fill="none"><defs><linearGradient id="spg" x1="0" y1="0" x2="0" y2="1"><stop offset="0" stop-color="#d4edf7"/><stop offset="1" stop-color="#ffffff"/></linearGradient></defs><path d="M2.2,10.2 L6.1,8.4 L9.0,9.3 L12.6,11.7 L17.3,9.0 L22.7,8.1 L26.2,9.0 L32.2,4.3 L35.7,6.1 L39.9,3.7 L42.9,5.5 L42.9,14 L2.2,14Z" fill="url(#spg)"/><path d="M2.2,10.2 L6.1,8.4 L9.0,9.3 L12.6,11.7 L17.3,9.0 L22.7,8.1 L26.2,9.0 L32.2,4.3 L35.7,6.1 L39.9,3.7 L42.9,5.5" stroke="#4d7f9c" stroke-width="1.3" fill="none" stroke-linejoin="round"/></svg>
<div class="t" style="left:308.80px;top:382.44px;font-size:13.3px;color:#4677a6;letter-spacing:0.157px;">Monthly Recurring</div>
<div class="t" style="left:308.80px;top:401.44px;font-size:13.3px;color:#4677a6;letter-spacing:-0.297px;">Revenue (MRR)</div>
<div class="t" style="right:684.20px;top:388.38px;font-size:11.6px;color:#6a6a6a;letter-spacing:-0.193px;">Current</div>
<div class="b" style="left:526.6px;top:380.0px;width:112.2px;height:26px;background:#fff;border:1px solid #e2e2e2;border-radius:3px;box-shadow:0 2px 0 #c3d8cb;"></div>
<div class="b" style="left:608.1px;top:380.0px;width:30.7px;height:26px;background:#ececec;border:1px solid #e2e2e2;border-left:1px solid #dcdcdc;border-radius:0 3px 3px 0;"></div>
<div class="t" style="left:536.60px;top:387.84px;font-size:12px;color:#444;">846</div>
<div class="t" style="left:623.45px;transform:translateX(-50%);top:388.18px;font-size:11.6px;color:#555;">US $</div>
<div class="b" style="left:648.8px;top:380.0px;width:112.2px;height:26px;background:#fff;border:1px solid #e2e2e2;border-radius:3px;box-shadow:0 2px 0 #c3d8cb;"></div>
<div class="b" style="left:730.3px;top:380.0px;width:30.7px;height:26px;background:#ececec;border:1px solid #e2e2e2;border-left:1px solid #dcdcdc;border-radius:0 3px 3px 0;"></div>
<div class="t" style="left:658.80px;top:387.84px;font-size:12px;color:#444;">947</div>
<div class="t" style="left:745.65px;transform:translateX(-50%);top:388.18px;font-size:11.6px;color:#555;">US $</div>
<div class="b" style="left:771.1px;top:380.0px;width:112.2px;height:26px;background:#fff;border:1px solid #e2e2e2;border-radius:3px;box-shadow:0 2px 0 #c3d8cb;"></div>
<div class="b" style="left:852.6px;top:380.0px;width:30.7px;height:26px;background:#ececec;border:1px solid #e2e2e2;border-left:1px solid #dcdcdc;border-radius:0 3px 3px 0;"></div>
<div class="t" style="left:781.10px;top:387.84px;font-size:12px;color:#444;">957</div>
<div class="t" style="left:867.95px;transform:translateX(-50%);top:388.18px;font-size:11.6px;color:#555;">US $</div>
<div class="b" style="left:893.3px;top:380.0px;width:112.2px;height:26px;background:#fff;border:1px solid #e2e2e2;border-radius:3px;box-shadow:0 2px 1px rgba(20,90,45,0.45);"></div>
<div class="b" style="left:974.8px;top:380.0px;width:30.7px;height:26px;background:#ececec;border:1px solid #e2e2e2;border-left:1px solid #dcdcdc;border-radius:0 3px 3px 0;"></div>
<div class="t" style="left:903.30px;top:387.84px;font-size:12px;color:#444;">485</div>
<div class="t" style="left:990.15px;transform:translateX(-50%);top:388.18px;font-size:11.6px;color:#555;">US $</div>
<div class="b" style="left:1016.3px;top:380.0px;width:112.2px;height:26px;background:#fff;border:1px solid #e2e2e2;border-radius:3px;box-shadow:0 2px 0 #c3d8cb;"></div>
<div class="b" style="left:1097.8px;top:380.0px;width:30.7px;height:26px;background:#ececec;border:1px solid #e2e2e2;border-left:1px solid #dcdcdc;border-radius:0 3px 3px 0;"></div>
<div class="t" style="left:1026.30px;top:387.84px;font-size:12px;color:#444;">0</div>
<div class="t" style="left:1113.15px;transform:translateX(-50%);top:388.18px;font-size:11.6px;color:#555;">US $</div>
<div class="t" style="left:259.40px;top:432.52px;font-size:11.2px;color:#a0a0a0;">4.</div>
<svg class="b" style="left:284.5px;top:429.0px;" width="16" height="14" viewBox="0 0 16 14" fill="none"><path d="M6,2.6 C4.3,2.6 3.5,4 3.5,5.6 C3.5,7.3 4.4,8.4 5,8.7 L5,9.3 C3,9.8 1.4,10.4 1.4,11.8 L1.4,12.6 L10.6,12.6 L10.6,11.8 C10.6,10.4 9,9.8 7,9.3 L7,8.7 C7.6,8.4 8.5,7.3 8.5,5.6 C8.5,4 7.7,2.6 6,2.6Z" stroke="#bdbdbd" stroke-width="1.1" fill="#fff"/><path d="M7.6,2.2 C8,1.4 8.6,1 9.4,1 C11.1,1 11.9,2.4 11.9,4 C11.9,5.7 11,6.8 10.4,7.1 L10.4,7.7 C12.4,8.2 14.3,8.8 14.3,10.2 L14.3,11 L11.6,11" stroke="#bdbdbd" stroke-width="1.1" fill="none"/></svg>
<div class="t" style="left:259.20px;top:446.52px;font-size:9.9px;color:#2d7f4b;letter-spacing:0.11px;-webkit-text-stroke-width:0.25px;">AI Health</div>
<div class="t" style="left:308.80px;top:430.44px;font-size:13.3px;color:#4677a6;letter-spacing:0.164px;">Annual Recurring</div>
<div class="t" style="left:308.80px;top:449.44px;font-size:13.3px;color:#4677a6;letter-spacing:-0.246px;">Revenue (ARR)</div>
<div class="t" style="right:684.20px;top:436.38px;font-size:11.6px;color:#6a6a6a;letter-spacing:-0.193px;">Current</div>
<div class="b" style="left:526.6px;top:428.0px;width:112.2px;height:26px;background:#fff;border:1px solid #e2e2e2;border-radius:3px;box-shadow:0 2px 0 #c3d8cb;"></div>
<div class="b" style="left:608.1px;top:428.0px;width:30.7px;height:26px;background:#ececec;border:1px solid #e2e2e2;border-left:1px solid #dcdcdc;border-radius:0 3px 3px 0;"></div>
<div class="t" style="left:536.60px;top:435.84px;font-size:12px;color:#444;">9674</div>
<div class="t" style="left:623.45px;transform:translateX(-50%);top:436.18px;font-size:11.6px;color:#555;">US $</div>
<div class="b" style="left:648.8px;top:428.0px;width:112.2px;height:26px;background:#fff;border:1px solid #e2e2e2;border-radius:3px;box-shadow:0 2px 0 #c3d8cb;"></div>
<div class="b" style="left:730.3px;top:428.0px;width:30.7px;height:26px;background:#ececec;border:1px solid #e2e2e2;border-left:1px solid #dcdcdc;border-radius:0 3px 3px 0;"></div>
<div class="t" style="left:658.80px;top:435.84px;font-size:12px;color:#444;">9132</div>
<div class="t" style="left:745.65px;transform:translateX(-50%);top:436.18px;font-size:11.6px;color:#555;">US $</div>
<div class="b" style="left:771.1px;top:428.0px;width:112.2px;height:26px;background:#fff;border:1px solid #e2e2e2;border-radius:3px;box-shadow:0 2px 0 #c3d8cb;"></div>
<div class="b" style="left:852.6px;top:428.0px;width:30.7px;height:26px;background:#ececec;border:1px solid #e2e2e2;border-left:1px solid #dcdcdc;border-radius:0 3px 3px 0;"></div>
<div class="t" style="left:781.10px;top:435.84px;font-size:12px;color:#444;">9832</div>
<div class="t" style="left:867.95px;transform:translateX(-50%);top:436.18px;font-size:11.6px;color:#555;">US $</div>
<div class="b" style="left:893.3px;top:428.0px;width:112.2px;height:26px;background:#fff;border:1px solid #e2e2e2;border-radius:3px;box-shadow:0 2px 1px rgba(20,90,45,0.45);"></div>
<div class="b" style="left:974.8px;top:428.0px;width:30.7px;height:26px;background:#ececec;border:1px solid #e2e2e2;border-left:1px solid #dcdcdc;border-radius:0 3px 3px 0;"></div>
<div class="t" style="left:903.30px;top:435.84px;font-size:12px;color:#444;">9358</div>
<div class="t" style="left:990.15px;transform:translateX(-50%);top:436.18px;font-size:11.6px;color:#555;">US $</div>
<div class="b" style="left:1016.3px;top:428.0px;width:112.2px;height:26px;background:#fff;border:1px solid #e2e2e2;border-radius:3px;box-shadow:0 2px 0 #c3d8cb;"></div>
<div class="b" style="left:1097.8px;top:428.0px;width:30.7px;height:26px;background:#ececec;border:1px solid #e2e2e2;border-left:1px solid #dcdcdc;border-radius:0 3px 3px 0;"></div>
<div class="t" style="left:1026.30px;top:435.84px;font-size:12px;color:#444;">0</div>
<div class="t" style="left:1113.15px;transform:translateX(-50%);top:436.18px;font-size:11.6px;color:#555;">US $</div>
<div class="t" style="left:259.40px;top:480.52px;font-size:11.2px;color:#a0a0a0;">5.</div>
<svg class="b" style="left:284.5px;top:477.0px;" width="16" height="14" viewBox="0 0 16 14" fill="none"><path d="M6,2.6 C4.3,2.6 3.5,4 3.5,5.6 C3.5,7.3 4.4,8.4 5,8.7 L5,9.3 C3,9.8 1.4,10.4 1.4,11.8 L1.4,12.6 L10.6,12.6 L10.6,11.8 C10.6,10.4 9,9.8 7,9.3 L7,8.7 C7.6,8.4 8.5,7.3 8.5,5.6 C8.5,4 7.7,2.6 6,2.6Z" stroke="#bdbdbd" stroke-width="1.1" fill="#fff"/><path d="M7.6,2.2 C8,1.4 8.6,1 9.4,1 C11.1,1 11.9,2.4 11.9,4 C11.9,5.7 11,6.8 10.4,7.1 L10.4,7.7 C12.4,8.2 14.3,8.8 14.3,10.2 L14.3,11 L11.6,11" stroke="#bdbdbd" stroke-width="1.1" fill="none"/></svg>
<div class="t" style="left:259.20px;top:494.52px;font-size:9.9px;color:#2d7f4b;letter-spacing:0.11px;-webkit-text-stroke-width:0.25px;">AI Health</div>
<div class="t" style="left:308.80px;top:478.44px;font-size:13.3px;color:#4677a6;letter-spacing:0.061px;">Budgeted Expenses</div>
<div class="t" style="right:684.20px;top:484.38px;font-size:11.6px;color:#6a6a6a;letter-spacing:-0.193px;">Current</div>
<div class="b" style="left:526.6px;top:476.0px;width:112.2px;height:26px;background:#fff;border:1px solid #e2e2e2;border-radius:3px;box-shadow:0 2px 0 #c3d8cb;"></div>
<div class="b" style="left:608.1px;top:476.0px;width:30.7px;height:26px;background:#ececec;border:1px solid #e2e2e2;border-left:1px solid #dcdcdc;border-radius:0 3px 3px 0;"></div>
<div class="t" style="left:536.60px;top:483.84px;font-size:12px;color:#444;">466</div>
<div class="t" style="left:623.45px;transform:translateX(-50%);top:484.18px;font-size:11.6px;color:#555;">US $</div>
<div class="b" style="left:648.8px;top:476.0px;width:112.2px;height:26px;background:#fff;border:1px solid #e2e2e2;border-radius:3px;box-shadow:0 2px 0 #c3d8cb;"></div>
<div class="b" style="left:730.3px;top:476.0px;width:30.7px;height:26px;background:#ececec;border:1px solid #e2e2e2;border-left:1px solid #dcdcdc;border-radius:0 3px 3px 0;"></div>
<div class="t" style="left:658.80px;top:483.84px;font-size:12px;color:#444;">845</div>
<div class="t" style="left:745.65px;transform:translateX(-50%);top:484.18px;font-size:11.6px;color:#555;">US $</div>
<div class="b" style="left:771.1px;top:476.0px;width:112.2px;height:26px;background:#fff;border:1px solid #e2e2e2;border-radius:3px;box-shadow:0 2px 0 #c3d8cb;"></div>
<div class="b" style="left:852.6px;top:476.0px;width:30.7px;height:26px;background:#ececec;border:1px solid #e2e2e2;border-left:1px solid #dcdcdc;border-radius:0 3px 3px 0;"></div>
<div class="t" style="left:781.10px;top:483.84px;font-size:12px;color:#444;">856</div>
<div class="t" style="left:867.95px;transform:translateX(-50%);top:484.18px;font-size:11.6px;color:#555;">US $</div>
<div class="b" style="left:893.3px;top:476.0px;width:112.2px;height:26px;background:#fff;border:1px solid #e2e2e2;border-radius:3px;box-shadow:0 2px 1px rgba(20,90,45,0.45);"></div>
<div class="b" style="left:974.8px;top:476.0px;width:30.7px;height:26px;background:#ececec;border:1px solid #e2e2e2;border-left:1px solid #dcdcdc;border-radius:0 3px 3px 0;"></div>
<div class="t" style="left:903.30px;top:483.84px;font-size:12px;color:#444;">659</div>
<div class="t" style="left:990.15px;transform:translateX(-50%);top:484.18px;font-size:11.6px;color:#555;">US $</div>
<div class="b" style="left:1016.3px;top:476.0px;width:112.2px;height:26px;background:#fff;border:1px solid #e2e2e2;border-radius:3px;box-shadow:0 2px 0 #c3d8cb;"></div>
<div class="b" style="left:1097.8px;top:476.0px;width:30.7px;height:26px;background:#ececec;border:1px solid #e2e2e2;border-left:1px solid #dcdcdc;border-radius:0 3px 3px 0;"></div>
<div class="t" style="left:1026.30px;top:483.84px;font-size:12px;color:#444;">0</div>
<div class="t" style="left:1113.15px;transform:translateX(-50%);top:484.18px;font-size:11.6px;color:#555;">US $</div>
<div class="t" style="left:259.40px;top:519.02px;font-size:11.2px;color:#a0a0a0;">6.</div>
<svg class="b" style="left:284.5px;top:515.5px;" width="16" height="14" viewBox="0 0 16 14" fill="none"><path d="M6,2.6 C4.3,2.6 3.5,4 3.5,5.6 C3.5,7.3 4.4,8.4 5,8.7 L5,9.3 C3,9.8 1.4,10.4 1.4,11.8 L1.4,12.6 L10.6,12.6 L10.6,11.8 C10.6,10.4 9,9.8 7,9.3 L7,8.7 C7.6,8.4 8.5,7.3 8.5,5.6 C8.5,4 7.7,2.6 6,2.6Z" stroke="#bdbdbd" stroke-width="1.1" fill="#fff"/><path d="M7.6,2.2 C8,1.4 8.6,1 9.4,1 C11.1,1 11.9,2.4 11.9,4 C11.9,5.7 11,6.8 10.4,7.1 L10.4,7.7 C12.4,8.2 14.3,8.8 14.3,10.2 L14.3,11 L11.6,11" stroke="#bdbdbd" stroke-width="1.1" fill="none"/></svg>
<div class="t" style="left:259.20px;top:533.02px;font-size:9.9px;color:#2d7f4b;letter-spacing:0.11px;-webkit-text-stroke-width:0.25px;">AI Health</div>
<div class="t" style="left:308.80px;top:516.94px;font-size:13.3px;color:#4677a6;letter-spacing:0.072px;">Operating Expenses</div>
<div class="t" style="right:684.20px;top:522.88px;font-size:11.6px;color:#6a6a6a;letter-spacing:-0.193px;">Current</div>
<div class="b" style="left:526.6px;top:514.5px;width:112.2px;height:26px;background:#fff;border:1px solid #e2e2e2;border-radius:3px;box-shadow:0 2px 0 #c3d8cb;"></div>
<div class="b" style="left:608.1px;top:514.5px;width:30.7px;height:26px;background:#ececec;border:1px solid #e2e2e2;border-left:1px solid #dcdcdc;border-radius:0 3px 3px 0;"></div>
<div class="t" style="left:536.60px;top:522.34px;font-size:12px;color:#444;">567</div>
<div class="t" style="left:623.45px;transform:translateX(-50%);top:522.68px;font-size:11.6px;color:#555;">US $</div>
<div class="b" style="left:648.8px;top:514.5px;width:112.2px;height:26px;background:#fff;border:1px solid #e2e2e2;border-radius:3px;box-shadow:0 2px 0 #c3d8cb;"></div>
<div class="b" style="left:730.3px;top:514.5px;width:30.7px;height:26px;background:#ececec;border:1px solid #e2e2e2;border-left:1px solid #dcdcdc;border-radius:0 3px 3px 0;"></div>
<div class="t" style="left:658.80px;top:522.34px;font-size:12px;color:#444;">676</div>
<div class="t" style="left:745.65px;transform:translateX(-50%);top:522.68px;font-size:11.6px;color:#555;">US $</div>
<div class="b" style="left:771.1px;top:514.5px;width:112.2px;height:26px;background:#fff;border:1px solid #e2e2e2;border-radius:3px;box-shadow:0 2px 0 #c3d8cb;"></div>
<div class="b" style="left:852.6px;top:514.5px;width:30.7px;height:26px;background:#ececec;border:1px solid #e2e2e2;border-left:1px solid #dcdcdc;border-radius:0 3px 3px 0;"></div>
<div class="t" style="left:781.10px;top:522.34px;font-size:12px;color:#444;">456</div>
<div class="t" style="left:867.95px;transform:translateX(-50%);top:522.68px;font-size:11.6px;color:#555;">US $</div>
<div class="b" style="left:893.3px;top:514.5px;width:112.2px;height:26px;background:#fff;border:1px solid #e2e2e2;border-radius:3px;box-shadow:0 2px 1px rgba(20,90,45,0.45);"></div>
<div class="b" style="left:974.8px;top:514.5px;width:30.7px;height:26px;background:#ececec;border:1px solid #e2e2e2;border-left:1px solid #dcdcdc;border-radius:0 3px 3px 0;"></div>
<div class="t" style="left:903.30px;top:522.34px;font-size:12px;color:#444;">456</div>
<div class="t" style="left:990.15px;transform:translateX(-50%);top:522.68px;font-size:11.6px;color:#555;">US $</div>
<div class="b" style="left:1016.3px;top:514.5px;width:112.2px;height:26px;background:#fff;border:1px solid #e2e2e2;border-radius:3px;box-shadow:0 2px 0 #c3d8cb;"></div>
<div class="b" style="left:1097.8px;top:514.5px;width:30.7px;height:26px;background:#ececec;border:1px solid #e2e2e2;border-left:1px solid #dcdcdc;border-radius:0 3px 3px 0;"></div>
<div class="t" style="left:1026.30px;top:522.34px;font-size:12px;color:#444;">0</div>
<div class="t" style="left:1113.15px;transform:translateX(-50%);top:522.68px;font-size:11.6px;color:#555;">US $</div>
<div class="t" style="left:259.40px;top:557.52px;font-size:11.2px;color:#a0a0a0;">7.</div>
<svg class="b" style="left:284.5px;top:554.0px;" width="16" height="14" viewBox="0 0 16 14" fill="none"><path d="M6,2.6 C4.3,2.6 3.5,4 3.5,5.6 C3.5,7.3 4.4,8.4 5,8.7 L5,9.3 C3,9.8 1.4,10.4 1.4,11.8 L1.4,12.6 L10.6,12.6 L10.6,11.8 C10.6,10.4 9,9.8 7,9.3 L7,8.7 C7.6,8.4 8.5,7.3 8.5,5.6 C8.5,4 7.7,2.6 6,2.6Z" stroke="#bdbdbd" stroke-width="1.1" fill="#fff"/><path d="M7.6,2.2 C8,1.4 8.6,1 9.4,1 C11.1,1 11.9,2.4 11.9,4 C11.9,5.7 11,6.8 10.4,7.1 L10.4,7.7 C12.4,8.2 14.3,8.8 14.3,10.2 L14.3,11 L11.6,11" stroke="#bdbdbd" stroke-width="1.1" fill="none"/></svg>
<div class="t" style="left:259.20px;top:571.52px;font-size:9.9px;color:#2d7f4b;letter-spacing:0.11px;-webkit-text-stroke-width:0.25px;">AI Health</div>
<div class="t" style="left:308.80px;top:555.44px;font-size:13.3px;color:#4677a6;letter-spacing:0.091px;">Expenses Budget</div>
<div class="t" style="left:308.80px;top:574.44px;font-size:13.3px;color:#4677a6;letter-spacing:0.172px;">Variance</div>
<div class="t" style="right:684.20px;top:561.38px;font-size:11.6px;color:#6a6a6a;letter-spacing:-0.193px;">Current</div>
<div class="b" style="left:526.6px;top:553.0px;width:112.2px;height:26px;background:#efefef;border:1px solid #e2e2e2;border-radius:3px;box-shadow:0 2px 0 #c3d8cb;"></div>
<div class="b" style="left:608.1px;top:553.0px;width:30.7px;height:26px;background:#ececec;border:1px solid #e2e2e2;border-left:1px solid #dcdcdc;border-radius:0 3px 3px 0;"></div>
<div class="t" style="left:536.60px;top:560.84px;font-size:12px;color:#9a9a9a;">-101</div>
<div class="t" style="left:623.45px;transform:translateX(-50%);top:561.18px;font-size:11.6px;color:#555;">US $</div>
<div class="b" style="left:648.8px;top:553.0px;width:112.2px;height:26px;background:#efefef;border:1px solid #e2e2e2;border-radius:3px;box-shadow:0 2px 0 #c3d8cb;"></div>
<div class="b" style="left:730.3px;top:553.0px;width:30.7px;height:26px;background:#ececec;border:1px solid #e2e2e2;border-left:1px solid #dcdcdc;border-radius:0 3px 3px 0;"></div>
<div class="t" style="left:658.80px;top:560.84px;font-size:12px;color:#9a9a9a;">169</div>
<div class="t" style="left:745.65px;transform:translateX(-50%);top:561.18px;font-size:11.6px;color:#555;">US $</div>
<div class="b" style="left:771.1px;top:553.0px;width:112.2px;height:26px;background:#efefef;border:1px solid #e2e2e2;border-radius:3px;box-shadow:0 2px 0 #c3d8cb;"></div>
<div class="b" style="left:852.6px;top:553.0px;width:30.7px;height:26px;background:#ececec;border:1px solid #e2e2e2;border-left:1px solid #dcdcdc;border-radius:0 3px 3px 0;"></div>
<div class="t" style="left:781.10px;top:560.84px;font-size:12px;color:#9a9a9a;">400</div>
<div class="t" style="left:867.95px;transform:translateX(-50%);top:561.18px;font-size:11.6px;color:#555;">US $</div>
<div class="b" style="left:893.3px;top:553.0px;width:112.2px;height:26px;background:#efefef;border:1px solid #e2e2e2;border-radius:3px;box-shadow:0 2px 1px rgba(20,90,45,0.45);"></div>
<div class="b" style="left:974.8px;top:553.0px;width:30.7px;height:26px;background:#ececec;border:1px solid #e2e2e2;border-left:1px solid #dcdcdc;border-radius:0 3px 3px 0;"></div>
<div class="t" style="left:903.30px;top:560.84px;font-size:12px;color:#9a9a9a;">203</div>
<div class="t" style="left:990.15px;transform:translateX(-50%);top:561.18px;font-size:11.6px;color:#555;">US $</div>
<div class="b" style="left:1016.3px;top:553.0px;width:112.2px;height:26px;background:#efefef;border:1px solid #e2e2e2;border-radius:3px;box-shadow:0 2px 0 #c3d8cb;"></div>
<div class="b" style="left:1097.8px;top:553.0px;width:30.7px;height:26px;background:#ececec;border:1px solid #e2e2e2;border-left:1px solid #dcdcdc;border-radius:0 3px 3px 0;"></div>
<div class="t" style="left:1026.30px;top:560.84px;font-size:12px;color:#9a9a9a;">0</div>
<div class="t" style="left:1113.15px;transform:translateX(-50%);top:561.18px;font-size:11.6px;color:#555;">US $</div>
<div class="t" style="left:259.40px;top:605.52px;font-size:11.2px;color:#a0a0a0;">8.</div>
<svg class="b" style="left:284.5px;top:602.0px;" width="16" height="14" viewBox="0 0 16 14" fill="none"><path d="M6,2.6 C4.3,2.6 3.5,4 3.5,5.6 C3.5,7.3 4.4,8.4 5,8.7 L5,9.3 C3,9.8 1.4,10.4 1.4,11.8 L1.4,12.6 L10.6,12.6 L10.6,11.8 C10.6,10.4 9,9.8 7,9.3 L7,8.7 C7.6,8.4 8.5,7.3 8.5,5.6 C8.5,4 7.7,2.6 6,2.6Z" stroke="#bdbdbd" stroke-width="1.1" fill="#fff"/><path d="M7.6,2.2 C8,1.4 8.6,1 9.4,1 C11.1,1 11.9,2.4 11.9,4 C11.9,5.7 11,6.8 10.4,7.1 L10.4,7.7 C12.4,8.2 14.3,8.8 14.3,10.2 L14.3,11 L11.6,11" stroke="#bdbdbd" stroke-width="1.1" fill="none"/></svg>
<div class="t" style="left:259.20px;top:619.52px;font-size:9.9px;color:#2d7f4b;letter-spacing:0.11px;-webkit-text-stroke-width:0.25px;">AI Health</div>
<div class="t" style="left:308.80px;top:603.44px;font-size:13.3px;color:#4677a6;letter-spacing:0.175px;">Net Profit</div>
<div class="t" style="right:684.20px;top:609.38px;font-size:11.6px;color:#6a6a6a;letter-spacing:-0.193px;">Current</div>
<div class="b" style="left:526.6px;top:601.0px;width:112.2px;height:26px;background:#efefef;border:1px solid #e2e2e2;border-radius:3px;box-shadow:0 2px 0 #c3d8cb;"></div>
<div class="b" style="left:608.1px;top:601.0px;width:30.7px;height:26px;background:#ececec;border:1px solid #e2e2e2;border-left:1px solid #dcdcdc;border-radius:0 3px 3px 0;"></div>
<div class="t" style="left:536.60px;top:608.84px;font-size:12px;color:#9a9a9a;">9007</div>
<div class="t" style="left:623.45px;transform:translateX(-50%);top:609.18px;font-size:11.6px;color:#555;">US $</div>
<div class="b" style="left:648.8px;top:601.0px;width:112.2px;height:26px;background:#efefef;border:1px solid #e2e2e2;border-radius:3px;box-shadow:0 2px 0 #c3d8cb;"></div>
<div class="b" style="left:730.3px;top:601.0px;width:30.7px;height:26px;background:#ececec;border:1px solid #e2e2e2;border-left:1px solid #dcdcdc;border-radius:0 3px 3px 0;"></div>
<div class="t" style="left:658.80px;top:608.84px;font-size:12px;color:#9a9a9a;">7781</div>
<div class="t" style="left:745.65px;transform:translateX(-50%);top:609.18px;font-size:11.6px;color:#555;">US $</div>
<div class="b" style="left:771.1px;top:601.0px;width:112.2px;height:26px;background:#efefef;border:1px solid #e2e2e2;border-radius:3px;box-shadow:0 2px 0 #c3d8cb;"></div>
<div class="b" style="left:852.6px;top:601.0px;width:30.7px;height:26px;background:#ececec;border:1px solid #e2e2e2;border-left:1px solid #dcdcdc;border-radius:0 3px 3px 0;"></div>
<div class="t" style="left:781.10px;top:608.84px;font-size:12px;color:#9a9a9a;">8888</div>
<div class="t" style="left:867.95px;transform:translateX(-50%);top:609.18px;font-size:11.6px;color:#555;">US $</div>
<div class="b" style="left:893.3px;top:601.0px;width:112.2px;height:26px;background:#efefef;border:1px solid #e2e2e2;border-radius:3px;box-shadow:0 2px 1px rgba(20,90,45,0.45);"></div>
<div class="b" style="left:974.8px;top:601.0px;width:30.7px;height:26px;background:#ececec;border:1px solid #e2e2e2;border-left:1px solid #dcdcdc;border-radius:0 3px 3px 0;"></div>
<div class="t" style="left:903.30px;top:608.84px;font-size:12px;color:#9a9a9a;">3028</div>
<div class="t" style="left:990.15px;transform:translateX(-50%);top:609.18px;font-size:11.6px;color:#555;">US $</div>
<div class="b" style="left:1016.3px;top:601.0px;width:112.2px;height:26px;background:#efefef;border:1px solid #e2e2e2;border-radius:3px;box-shadow:0 2px 0 #c3d8cb;"></div>
<div class="b" style="left:1097.8px;top:601.0px;width:30.7px;height:26px;background:#ececec;border:1px solid #e2e2e2;border-left:1px solid #dcdcdc;border-radius:0 3px 3px 0;"></div>
<div class="t" style="left:1026.30px;top:608.84px;font-size:12px;color:#9a9a9a;">0</div>
<div class="t" style="left:1113.15px;transform:translateX(-50%);top:609.18px;font-size:11.6px;color:#555;">US $</div>
<div class="t" style="left:259.40px;top:644.02px;font-size:11.2px;color:#a0a0a0;">9.</div>
<svg class="b" style="left:284.5px;top:640.5px;" width="16" height="14" viewBox="0 0 16 14" fill="none"><path d="M6,2.6 C4.3,2.6 3.5,4 3.5,5.6 C3.5,7.3 4.4,8.4 5,8.7 L5,9.3 C3,9.8 1.4,10.4 1.4,11.8 L1.4,12.6 L10.6,12.6 L10.6,11.8 C10.6,10.4 9,9.8 7,9.3 L7,8.7 C7.6,8.4 8.5,7.3 8.5,5.6 C8.5,4 7.7,2.6 6,2.6Z" stroke="#bdbdbd" stroke-width="1.1" fill="#fff"/><path d="M7.6,2.2 C8,1.4 8.6,1 9.4,1 C11.1,1 11.9,2.4 11.9,4 C11.9,5.7 11,6.8 10.4,7.1 L10.4,7.7 C12.4,8.2 14.3,8.8 14.3,10.2 L14.3,11 L11.6,11" stroke="#bdbdbd" stroke-width="1.1" fill="none"/></svg>
<div class="t" style="left:259.20px;top:658.02px;font-size:9.9px;color:#2d7f4b;letter-spacing:0.11px;-webkit-text-stroke-width:0.25px;">AI Health</div>
<div class="t" style="left:308.80px;top:641.94px;font-size:13.3px;color:#4677a6;letter-spacing:0.203px;">Net Profit Margin</div>
<div class="t" style="right:684.20px;top:647.88px;font-size:11.6px;color:#6a6a6a;letter-spacing:-0.193px;">Current</div>
<div class="b" style="left:526.6px;top:639.5px;width:112.2px;height:26px;background:#efefef;border:1px solid #e2e2e2;border-radius:3px;box-shadow:0 2px 0 #c3d8cb;"></div>
<div class="b" style="left:623.0px;top:639.5px;width:15.8px;height:26px;background:#ececec;border:1px solid #e2e2e2;border-left:1px solid #dcdcdc;border-radius:0 3px 3px 0;"></div>
<div class="t" style="left:536.60px;top:647.34px;font-size:12px;color:#9a9a9a;">94.08</div>
<div class="t" style="left:630.90px;transform:translateX(-50%);top:647.68px;font-size:11.6px;color:#555;">%</div>
<div class="b" style="left:648.8px;top:639.5px;width:112.2px;height:26px;background:#efefef;border:1px solid #e2e2e2;border-radius:3px;box-shadow:0 2px 0 #c3d8cb;"></div>
<div class="b" style="left:745.2px;top:639.5px;width:15.8px;height:26px;background:#ececec;border:1px solid #e2e2e2;border-left:1px solid #dcdcdc;border-radius:0 3px 3px 0;"></div>
<div class="t" style="left:658.80px;top:647.34px;font-size:12px;color:#9a9a9a;">92.01</div>
<div class="t" style="left:753.10px;transform:translateX(-50%);top:647.68px;font-size:11.6px;color:#555;">%</div>
<div class="b" style="left:771.1px;top:639.5px;width:112.2px;height:26px;background:#efefef;border:1px solid #e2e2e2;border-radius:3px;box-shadow:0 2px 0 #c3d8cb;"></div>
<div class="b" style="left:867.5px;top:639.5px;width:15.8px;height:26px;background:#ececec;border:1px solid #e2e2e2;border-left:1px solid #dcdcdc;border-radius:0 3px 3px 0;"></div>
<div class="t" style="left:781.10px;top:647.34px;font-size:12px;color:#9a9a9a;">95.12</div>
<div class="t" style="left:875.40px;transform:translateX(-50%);top:647.68px;font-size:11.6px;color:#555;">%</div>
<div class="b" style="left:893.3px;top:639.5px;width:112.2px;height:26px;background:#efefef;border:1px solid #e2e2e2;border-radius:3px;box-shadow:0 2px 1px rgba(20,90,45,0.45);"></div>
<div class="b" style="left:989.7px;top:639.5px;width:15.8px;height:26px;background:#ececec;border:1px solid #e2e2e2;border-left:1px solid #dcdcdc;border-radius:0 3px 3px 0;"></div>
<div class="t" style="left:903.30px;top:647.34px;font-size:12px;color:#9a9a9a;">86.91</div>
<div class="t" style="left:997.60px;transform:translateX(-50%);top:647.68px;font-size:11.6px;color:#555;">%</div>
<div class="b" style="left:1016.3px;top:639.5px;width:112.2px;height:26px;background:#efefef;border:1px solid #e2e2e2;border-radius:3px;box-shadow:0 2px 0 #c3d8cb;"></div>
<div class="b" style="left:1112.7px;top:639.5px;width:15.8px;height:26px;background:#ececec;border:1px solid #e2e2e2;border-left:1px solid #dcdcdc;border-radius:0 3px 3px 0;"></div>
<div class="t" style="left:1026.30px;top:647.34px;font-size:12px;color:#9a9a9a;">0</div>
<div class="t" style="left:1120.60px;transform:translateX(-50%);top:647.68px;font-size:11.6px;color:#555;">%</div>
<svg class="b" style="left:395.9px;top:306.2px;" width="12" height="12" viewBox="0 0 12 12" fill="none"><circle cx="6" cy="6" r="5.6" fill="#3a6ea5"/><circle cx="6" cy="3.3" r="1" fill="#fff"/><path d="M4.6,5.2 L6.8,5.2 L6.8,8.8 L7.6,8.8 L7.6,9.6 L4.6,9.6 L4.6,8.8 L5.4,8.8 L5.4,6 L4.6,6Z" fill="#fff"/></svg>
<svg class="b" style="left:364px;top:344.8px;" width="12" height="12" viewBox="0 0 12 12" fill="none"><circle cx="6" cy="6" r="5.6" fill="#3a6ea5"/><circle cx="6" cy="3.3" r="1" fill="#fff"/><path d="M4.6,5.2 L6.8,5.2 L6.8,8.8 L7.6,8.8 L7.6,9.6 L4.6,9.6 L4.6,8.8 L5.4,8.8 L5.4,6 L4.6,6Z" fill="#fff"/></svg>
<svg class="b" style="left:405.5px;top:401.8px;" width="12" height="12" viewBox="0 0 12 12" fill="none"><circle cx="6" cy="6" r="5.6" fill="#3a6ea5"/><circle cx="6" cy="3.3" r="1" fill="#fff"/><path d="M4.6,5.2 L6.8,5.2 L6.8,8.8 L7.6,8.8 L7.6,9.6 L4.6,9.6 L4.6,8.8 L5.4,8.8 L5.4,6 L4.6,6Z" fill="#fff"/></svg>
<svg class="b" style="left:403.5px;top:449.8px;" width="12" height="12" viewBox="0 0 12 12" fill="none"><circle cx="6" cy="6" r="5.6" fill="#3a6ea5"/><circle cx="6" cy="3.3" r="1" fill="#fff"/><path d="M4.6,5.2 L6.8,5.2 L6.8,8.8 L7.6,8.8 L7.6,9.6 L4.6,9.6 L4.6,8.8 L5.4,8.8 L5.4,6 L4.6,6Z" fill="#fff"/></svg>
<svg class="b" style="left:432px;top:479px;" width="12" height="12" viewBox="0 0 12 12" fill="none"><circle cx="6" cy="6" r="5.6" fill="#3a6ea5"/><circle cx="6" cy="3.3" r="1" fill="#fff"/><path d="M4.6,5.2 L6.8,5.2 L6.8,8.8 L7.6,8.8 L7.6,9.6 L4.6,9.6 L4.6,8.8 L5.4,8.8 L5.4,6 L4.6,6Z" fill="#fff"/></svg>
<svg class="b" style="left:434.5px;top:517.6px;" width="12" height="12" viewBox="0 0 12 12" fill="none"><circle cx="6" cy="6" r="5.6" fill="#3a6ea5"/><circle cx="6" cy="3.3" r="1" fill="#fff"/><path d="M4.6,5.2 L6.8,5.2 L6.8,8.8 L7.6,8.8 L7.6,9.6 L4.6,9.6 L4.6,8.8 L5.4,8.8 L5.4,6 L4.6,6Z" fill="#fff"/></svg>
<svg class="b" style="left:364.5px;top:574.6px;" width="12" height="12" viewBox="0 0 12 12" fill="none"><circle cx="6" cy="6" r="5.6" fill="#3a6ea5"/><circle cx="6" cy="3.3" r="1" fill="#fff"/><path d="M4.6,5.2 L6.8,5.2 L6.8,8.8 L7.6,8.8 L7.6,9.6 L4.6,9.6 L4.6,8.8 L5.4,8.8 L5.4,6 L4.6,6Z" fill="#fff"/></svg>
<svg class="b" style="left:369px;top:604px;" width="12" height="12" viewBox="0 0 12 12" fill="none"><circle cx="6" cy="6" r="5.6" fill="#3a6ea5"/><circle cx="6" cy="3.3" r="1" fill="#fff"/><path d="M4.6,5.2 L6.8,5.2 L6.8,8.8 L7.6,8.8 L7.6,9.6 L4.6,9.6 L4.6,8.8 L5.4,8.8 L5.4,6 L4.6,6Z" fill="#fff"/></svg>
<svg class="b" style="left:415px;top:642.8px;" width="12" height="12" viewBox="0 0 12 12" fill="none"><circle cx="6" cy="6" r="5.6" fill="#3a6ea5"/><circle cx="6" cy="3.3" r="1" fill="#fff"/><path d="M4.6,5.2 L6.8,5.2 L6.8,8.8 L7.6,8.8 L7.6,9.6 L4.6,9.6 L4.6,8.8 L5.4,8.8 L5.4,6 L4.6,6Z" fill="#fff"/></svg>
</body></html>
